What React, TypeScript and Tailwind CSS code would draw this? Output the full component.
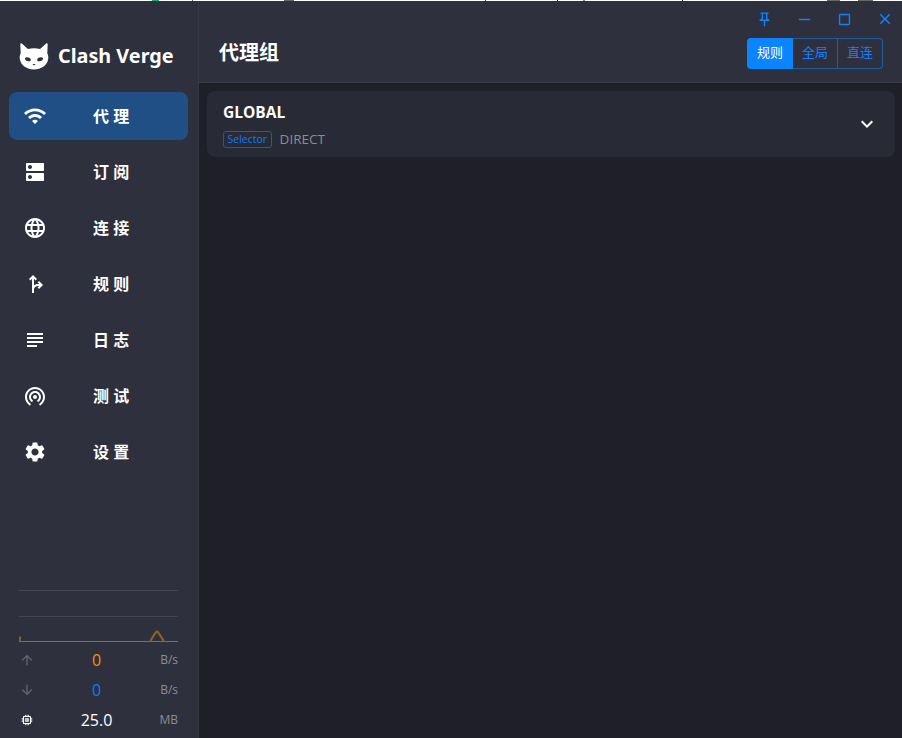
import { MdWifi, MdDns, MdLanguage, MdForkRight, MdSubject, MdWifiTethering, MdSettings, MdArrowUpward, MdArrowDownward, MdMemory, MdOutlinePushPin, MdHorizontalRule, MdCropSquare, MdClose, MdExpandMore } from "react-icons/md";

const navItems = [
  { label: "代 理", icon: MdWifi, active: true },
  { label: "订 阅", icon: MdDns },
  { label: "连 接", icon: MdLanguage },
  { label: "规 则", icon: MdForkRight },
  { label: "日 志", icon: MdSubject },
  { label: "测 试", icon: MdWifiTethering },
  { label: "设 置", icon: MdSettings },
];

const font = "font-['Open_Sans','Noto_Sans_CJK_SC',sans-serif]";

function CatLogo() {
  return (
    <svg width="30" height="28" viewBox="0 0 32 30" preserveAspectRatio="none" className="shrink-0">
      <path
        d="M3 1.500c-.8-.5-1.600 0-1.600 1L1.800 12C.8 14 .5 16 .9 18.500 2 25 8.500 29.500 16 29.500S30 25 31.100 18.500c.4-2.500.1-4.500-.9-6.500l.4-9.500c0-1-.8-1.500-1.600-1L22.500 7.500c-4-1.200-9-1.200-13 0z"
        fill="#fff"
      />
      <ellipse cx="9.500" cy="18.500" rx="3.200" ry="2" fill="#2e303d" transform="rotate(18 9.500 18.500)" />
      <ellipse cx="22.500" cy="18.500" rx="3.200" ry="2" fill="#2e303d" transform="rotate(-18 22.500 18.500)" />
      <path d="M14.300 23.600h3.400L16 25.300z" fill="#2e303d" />
    </svg>
  );
}

function Stat({ icon, value, unit, color }: { icon: React.ReactNode; value: string; unit: string; color: string }) {
  return (
    <div className="flex h-[30px] items-center">
      <div className="flex w-[16px] justify-center">{icon}</div>
      <div className={`flex-1 pr-[4px] text-center text-[16px] ${color}`}>{value}</div>
      <div className="flex w-[16px] justify-end whitespace-nowrap text-[12px] text-[#8d8e93]">{unit}</div>
    </div>
  );
}

export default function App() {
  return (
    <div className={`flex h-[738px] w-[902px] flex-col overflow-hidden bg-[#1e1f27] text-white ${font}`}>
      <svg width="902" height="1" className="block shrink-0">
        <rect width="902" height="1" fill="#fff" />
        <rect x="152" width="7" height="1" fill="#1fa870" />
        <rect x="192" width="1" height="1" fill="#555" />
        <rect x="284" width="10" height="1" fill="#666" />
        <rect x="485" width="1" height="1" fill="#444" />
        <rect x="557" width="1" height="1" fill="#222" />
        <rect x="583" width="2" height="1" fill="#888" />
        <rect x="682" width="1" height="1" fill="#222" />
        <rect x="827" width="13" height="1" fill="#666" />
        <rect x="858" width="15" height="1" fill="#666" />
      </svg>
      <div className="flex min-h-0 flex-1">
        <aside className="flex w-[199px] shrink-0 flex-col border-r border-[#363842] bg-[#2e303d]">
          <div className="flex h-[91px] items-center gap-[9px] pl-[19px] pt-[18px]">
            <CatLogo />
            <span className="text-[19.800px] font-bold leading-none font-['Noto_Sans',sans-serif]">Clash Verge</span>
          </div>
          <nav className="flex flex-col gap-[8px] pl-[9px] pr-[10px]">
            {navItems.map((item) => (
              <div key={item.label} className={`flex h-[48px] items-center rounded-[8px] ${item.active ? "bg-[#1f4f85]" : ""}`}>
                <item.icon className="ml-[14px] shrink-0 text-white" size={24} />
                <span className="ml-[46px] text-[16px] font-bold">{item.label}</span>
              </div>
            ))}
          </nav>
          <div className="mt-auto pb-[3px] pl-[19px] pr-[20px]">
            <svg width="159" height="52" viewBox="0 0 159 52" className="block">
              <path d="M0 .5h159M0 26.500h159" stroke="#44464f" fill="none" />
              <path d="M.5 51c.3-2 .6-3.500 1-4.500M131 51c2-1 4-8 7-9.500 3 1.500 5 8.500 7 9.500" stroke="#8f6422" strokeWidth="2" fill="none" />
              <path d="M0 51.500h159" stroke="#1b82f1" fill="none" />
            </svg>
            <div className="mt-[3px]">
              <Stat icon={<MdArrowUpward size={16} className="text-[#62646e]" />} value="0" unit="B/s" color="text-[#f79009]" />
              <Stat icon={<MdArrowDownward size={16} className="text-[#62646e]" />} value="0" unit="B/s" color="text-[#0b7bff]" />
              <Stat icon={<MdMemory size={14} className="text-white" />} value="25.0" unit="MB" color="text-white" />
            </div>
          </div>
        </aside>
        <main className="flex min-w-0 flex-1 flex-col">
          <header className="h-[82px] shrink-0 border-b border-[#3a3c47] bg-[#2e303d] pl-[20px] pr-[19px]">
            <div className="flex h-[36px] items-center justify-end text-[#0a84ff]">
              <MdOutlinePushPin size={17} className="mr-[23px]" />
              <MdHorizontalRule size={17} className="mr-[23px]" />
              <MdCropSquare size={17} className="mr-[23px]" />
              <MdClose size={18} className="-mr-[11px]" />
            </div>
            <div className="flex items-center justify-between">
              <h1 className="text-[20px] font-bold leading-[32px]">代理组</h1>
              <div className="flex h-[31px] text-[13px] text-[#1080ff]">
                <div className="flex w-[46px] items-center justify-center rounded-l-[4px] bg-[#0a84ff] text-white">规则</div>
                <div className="flex w-[45px] items-center justify-center border-y border-r border-[#1d5c9f]">全局</div>
                <div className="flex w-[45px] items-center justify-center rounded-r-[4px] border-y border-r border-[#1d5c9f]">直连</div>
              </div>
            </div>
          </header>
          <div className="pl-[8px] pr-[7px] pt-[8px]">
            <div className="flex h-[66px] items-start justify-between rounded-[8px] bg-[#282a36] pl-[16px] pr-[16px]">
              <div className="pt-[11px]">
                <div className="text-[15.500px] font-bold leading-[20px]">GLOBAL</div>
                <div className="mt-[9px] flex items-center">
                  <span className="rounded-[3px] border border-[#1d5c9f] px-[3.500px] text-[10.500px] leading-[15px] text-[#0a7bff]">Selector</span>
                  <span className="-mt-[2px] ml-[8px] text-[13.500px] leading-[16px] text-[#8d8e93]">DIRECT</span>
                </div>
              </div>
              <MdExpandMore size={24} className="self-center text-white" />
            </div>
          </div>
        </main>
      </div>
    </div>
  );
}
